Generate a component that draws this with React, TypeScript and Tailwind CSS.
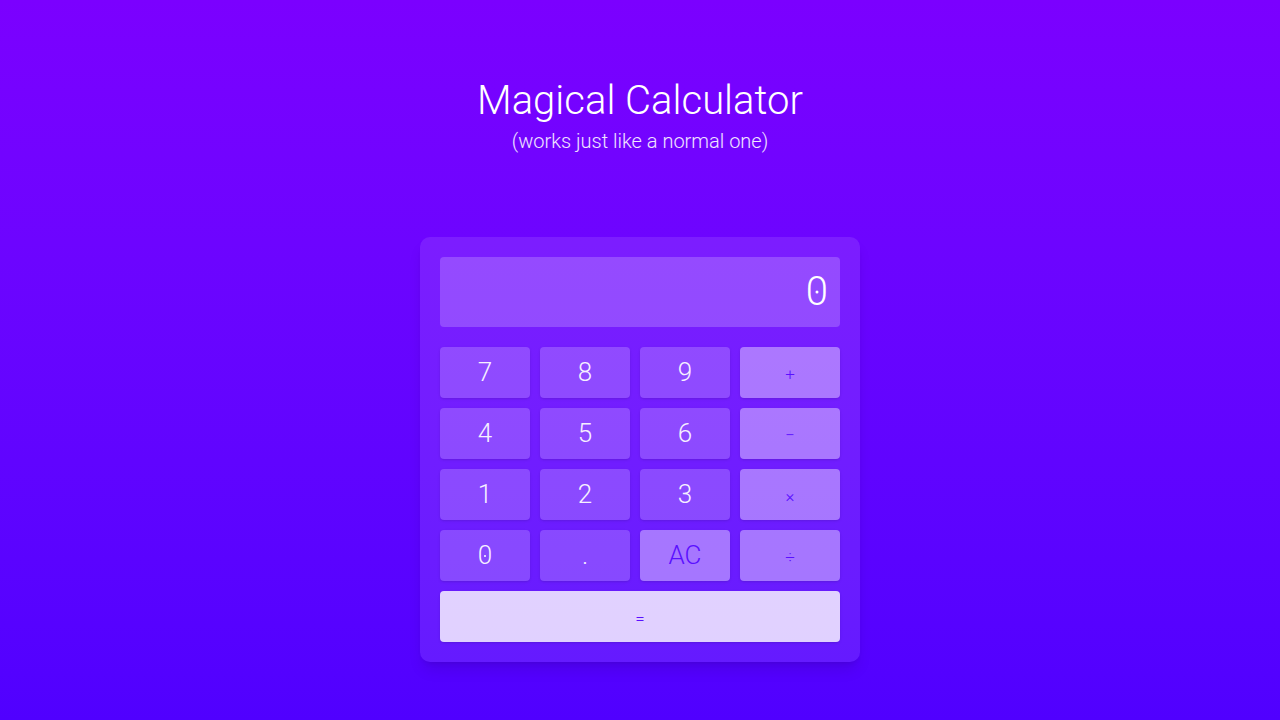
import React from 'react'

type Key = {
	label: string
	kind: 'digit' | 'op' | 'ac' | 'eq'
}

const keys: Key[] = [
	{ label: '7', kind: 'digit' },
	{ label: '8', kind: 'digit' },
	{ label: '9', kind: 'digit' },
	{ label: '+', kind: 'op' },
	{ label: '4', kind: 'digit' },
	{ label: '5', kind: 'digit' },
	{ label: '6', kind: 'digit' },
	{ label: '−', kind: 'op' },
	{ label: '1', kind: 'digit' },
	{ label: '2', kind: 'digit' },
	{ label: '3', kind: 'digit' },
	{ label: '×', kind: 'op' },
	{ label: '0', kind: 'digit' },
	{ label: '.', kind: 'digit' },
	{ label: 'AC', kind: 'ac' },
	{ label: '÷', kind: 'op' },
	{ label: '=', kind: 'eq' },
]

// dotted zero, like the original font
function Zero({ dot }: { dot: string }) {
	return (
		<span className="relative inline-block">
			0
			<span className={`absolute left-1/2 top-1/2 -translate-x-1/2 -translate-y-1/2 rounded-full bg-white ${dot}`} />
		</span>
	)
}

function CalcKey({ label, kind }: Key) {
	const styles = {
		digit: 'bg-white/20 text-[26px] font-light text-[#f6f0ff]',
		op: 'bg-white/40 pt-1 text-[17px] font-light text-[#5a10ff]',
		ac: 'bg-white/40 text-[26px] font-light text-[#5a10ff]',
		eq: 'col-span-4 bg-white/80 pt-1 text-[17px] font-light text-[#5a10ff]',
	}

	return (
		<button
			className={`flex h-[51px] items-center justify-center rounded-[4px] shadow-sm shadow-black/10 ${styles[kind]}`}
		>
			{label === '0' ? <Zero dot="h-[2px] w-[2px]" /> : label}
		</button>
	)
}

export default function App() {
	return (
		<div className="flex min-h-screen flex-col items-center bg-linear-to-b from-[#7b00ff] to-[#5000ff] pt-[77px] font-[Roboto,sans-serif]">
			<h1 className="text-[40px] leading-[48px] font-light text-white">
				Magical Calculator
			</h1>
			<p className="mt-[4px] text-[20px] leading-[24px] font-light text-white/90">
				(works just like a normal one)
			</p>

			<div className="mt-[84px] w-[440px] rounded-[10px] bg-white/10 p-5 shadow-lg shadow-black/10">
				<div className="flex h-[70px] items-center justify-end rounded-[4px] bg-white/20 pr-3 text-[40px] font-light text-white">
					<Zero dot="h-[3px] w-[3px]" />
				</div>

				<div className="mt-5 grid grid-cols-[90px_90px_90px_100px] gap-[10px]">
					{keys.map((k) => (
						<CalcKey key={k.label} label={k.label} kind={k.kind} />
					))}
				</div>
			</div>
		</div>
	)
}
